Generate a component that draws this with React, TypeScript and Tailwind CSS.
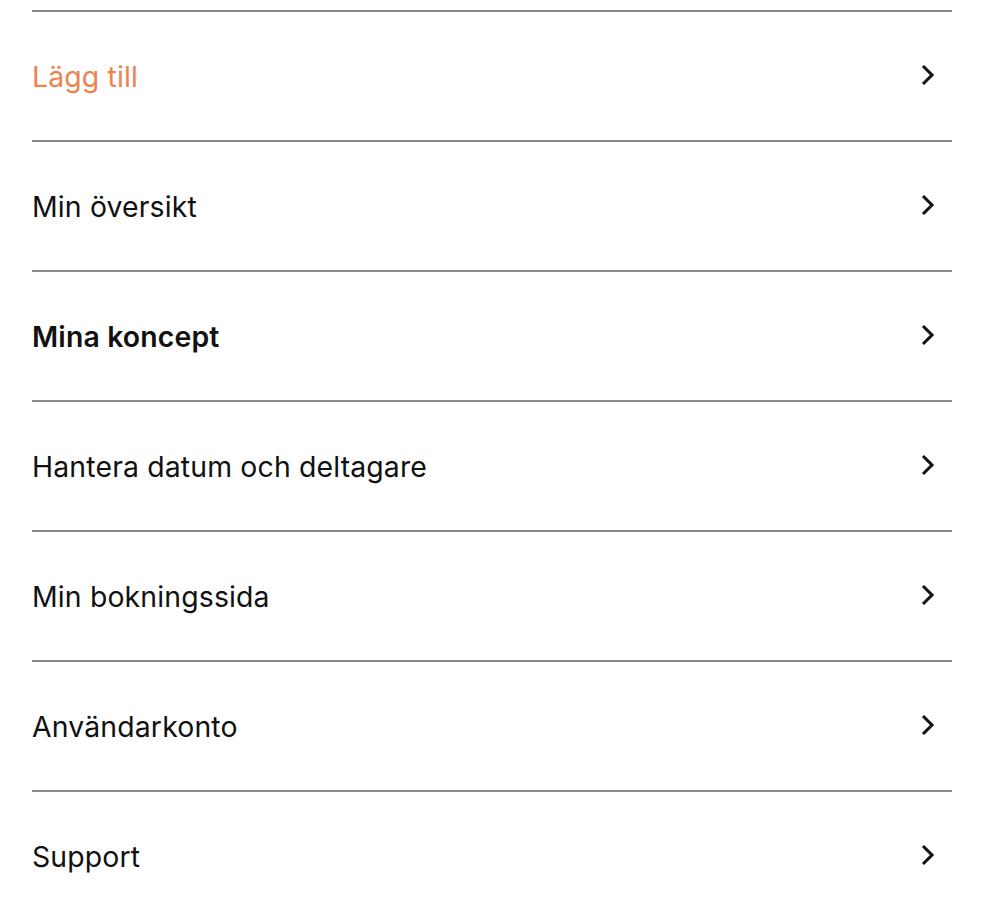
import React from "react";

const items = [
  { label: "Lägg till", cls: "text-[#eb8450]" },
  { label: "Min översikt", cls: "text-[#111111]" },
  { label: "Mina koncept", cls: "text-[#111111] font-semibold" },
  { label: "Hantera datum och deltagare", cls: "text-[#111111]" },
  { label: "Min bokningssida", cls: "text-[#111111]" },
  { label: "Användarkonto", cls: "text-[#111111]" },
  { label: "Support", cls: "text-[#111111]" },
];

function Chevron() {
  return (
    <svg width="14" height="22" viewBox="0 0 14 22" fill="none">
      <path d="M2 2L11 11L2 20" stroke="#111" strokeWidth="3" />
    </svg>
  );
}

export default function App() {
  return (
    <div className="bg-white min-h-[904px] pt-[10px] pl-[32px] pr-[36px] w-[988px]" style={{ fontFamily: "Inter, 'Noto Sans', sans-serif" }}>
      {items.map((it) => (
        <div key={it.label} className="border-t-2 border-[#8a8a8a] h-[130px] flex items-center justify-between">
          <span className={`text-[28.4px] tracking-[0.15px] pt-[3px] ${it.cls}`}>{it.label}</span>
          <div className="mr-[17px] mb-[2px]"><Chevron /></div>
        </div>
      ))}
    </div>
  );
}
